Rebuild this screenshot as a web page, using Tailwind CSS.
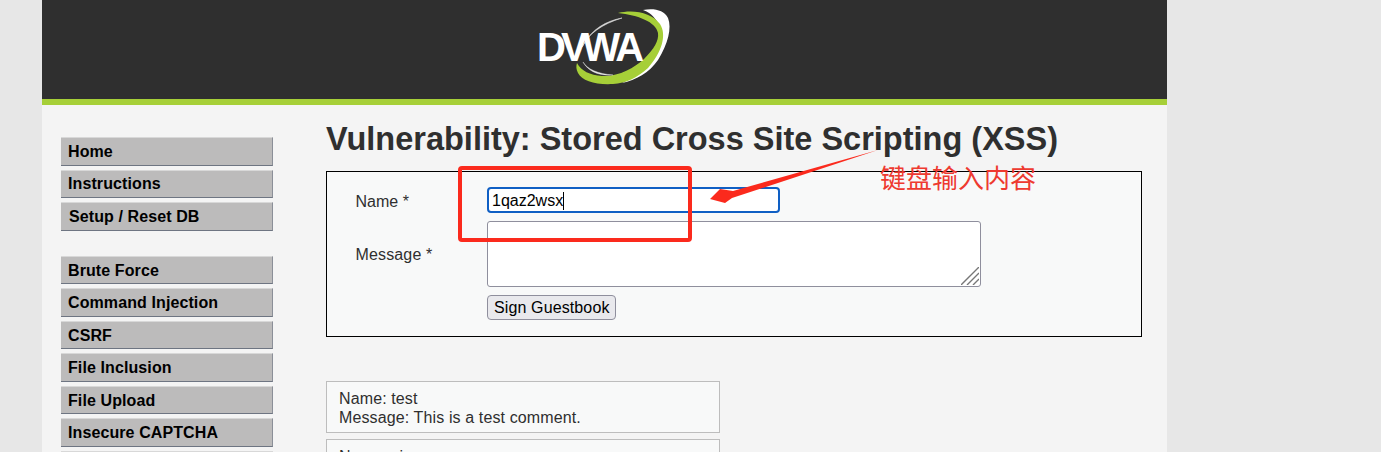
<!DOCTYPE html>
<html lang="en">
<head>
  <meta charset="UTF-8" />
  <title>Vulnerability: Stored Cross Site Scripting (XSS)</title>
  <script src="https://cdn.jsdelivr.net/npm/@tailwindcss/browser@4"></script>
</head>
<body class="bg-[#e7e7e7] h-[452px] overflow-hidden font-['Liberation_Sans',Arial,sans-serif] text-[#2f2f2f]">
  <div class="relative ml-[42px] w-[1125px] h-[452px] bg-[#f4f4f4] overflow-hidden">

    <!-- header -->
    <div class="relative h-[105px] bg-[#2f2f2f] border-b-[6px] border-[#a6cf38] flex justify-center">
      <div class="relative w-[140px] h-[99px] ml-[-1px]">
        <svg class="absolute inset-0" width="140" height="99" viewBox="0 0 140 99" fill="none">
          <path d="M109 10 C120 8 130 10 134 18 C138 28 134 44 124 60 C115 73 102 80 88 83 C104 76 118 62 124 46 C128 34 126 26 122 20 C118 14 114 12 109 10 Z" fill="#ffffff"/>
          <path d="M84 13 C100 9 118 13 126 24 C133 35 128 52 114 68 C103 78 92 83 79 84 C62 85 48 81 44 73 C42 69 42 66 43 63 C47 71 56 75 68 76 C84 77 100 68 110 59 C120 49 125 41 124 33 C122 22 104 15 84 13 Z" fill="#a6cf38"/>
          <path d="M88 18 C72 21 58 29 50 44 L48 47 C54 34 68 24 88 18 Z" fill="#d8d8d8" stroke="#d8d8d8" stroke-width="0.6"/>
          <path d="M49 62 C53 69 64 74 79 75 C64 76 54 71 49 62 Z" fill="#e8e8e8" stroke="#e8e8e8" stroke-width="0.4"/>
        </svg>
        <span class="absolute left-[3px] top-[24px] text-[40px] leading-[46px] font-bold text-white tracking-[-5px] [font-kerning:none]">DVWA</span>
      </div>
    </div>

    <div class="flex">
      <!-- sidebar -->
      <div class="w-[284px] pl-[19px] pt-[32px] shrink-0 text-[16px] font-bold text-black tracking-[0.1px]">
        <div class="flex flex-col w-[212px] gap-[4px]">
          <div class="h-[28.5px] pl-[7px] pt-[1px] leading-[26px] bg-[#bcbbbb] border-t border-t-[#d8d8d8] border-b border-b-[#6e7582] border-r border-r-[#8b8f98]">Home</div>
          <div class="h-[28.5px] pl-[7px] leading-[26px] bg-[#bcbbbb] border-t border-t-[#d8d8d8] border-b border-b-[#6e7582] border-r border-r-[#8b8f98]">Instructions</div>
          <div class="h-[28.5px] pl-[8px] pt-[1px] leading-[26px] bg-[#bcbbbb] border-t border-t-[#d8d8d8] border-b border-b-[#6e7582] border-r border-r-[#8b8f98]">Setup / Reset DB</div>
        </div>
        <div class="flex flex-col w-[212px] gap-[4px] mt-[25px]">
          <div class="h-[28.5px] pl-[7px] pt-[1px] leading-[26px] bg-[#bcbbbb] border-t border-t-[#d8d8d8] border-b border-b-[#6e7582] border-r border-r-[#8b8f98]">Brute Force</div>
          <div class="h-[28.5px] pl-[7px] pt-[1px] leading-[26px] bg-[#bcbbbb] border-t border-t-[#d8d8d8] border-b border-b-[#6e7582] border-r border-r-[#8b8f98]">Command Injection</div>
          <div class="h-[28.5px] pl-[7px] pt-[1px] leading-[26px] bg-[#bcbbbb] border-t border-t-[#d8d8d8] border-b border-b-[#6e7582] border-r border-r-[#8b8f98]">CSRF</div>
          <div class="h-[28.5px] pl-[7px] pt-[1px] leading-[26px] bg-[#bcbbbb] border-t border-t-[#d8d8d8] border-b border-b-[#6e7582] border-r border-r-[#8b8f98]">File Inclusion</div>
          <div class="h-[28.5px] pl-[7px] pt-[1px] leading-[26px] bg-[#bcbbbb] border-t border-t-[#d8d8d8] border-b border-b-[#6e7582] border-r border-r-[#8b8f98]">File Upload</div>
          <div class="h-[28.5px] pl-[7px] pt-[1px] leading-[26px] bg-[#bcbbbb] border-t border-t-[#d8d8d8] border-b border-b-[#6e7582] border-r border-r-[#8b8f98]">Insecure CAPTCHA</div>
          <div class="h-[28.5px] bg-[#bcbbbb] border-t border-t-[#d8d8d8]"></div>
        </div>
      </div>

      <!-- main -->
      <div class="flex-1 min-w-0">
        <h1 class="text-[32.5px] leading-[37px] font-bold mt-[16px] whitespace-nowrap">Vulnerability: Stored Cross Site Scripting (XSS)</h1>
        <div class="w-[816px] h-[166px] mt-[13px] bg-[#f8f9f9] border border-black pt-[15px] text-[16px]">
          <div class="flex">
            <div class="w-[160px] pl-[28.5px] pt-[6px] leading-[18px]">Name *</div>
            <div class="w-[293px] h-[26px] bg-white border-2 border-[#0f5fc4] rounded-[4px] flex items-center pl-[3px] pt-[2px] text-black leading-[18px]">1qaz2wsx<span class="w-px h-[18px] bg-black"></span></div>
          </div>
          <div class="flex mt-[8px]">
            <div class="w-[160px] pl-[28.5px] pt-[25px] leading-[18px] tracking-[0.15px]">Message *</div>
            <div class="relative w-[494px] h-[66px] bg-white border border-[#8f8f9d] rounded-[3px]">
              <svg class="absolute right-[1px] bottom-[1px]" width="18" height="18" viewBox="0 0 18 18" stroke="#777" stroke-width="1.4">
                <path d="M0 18 L18 0 M6 18 L18 6 M12 18 L18 12"/>
              </svg>
            </div>
          </div>
          <div class="pl-[160px] mt-[8px]">
            <button class="h-[25px] pl-[6px] pr-[5px] text-[16px] leading-[20px] tracking-[0.12px] text-black bg-[#e9e9ed] border border-[#8f8f9d] rounded-[4px]">Sign Guestbook</button>
          </div>
        </div>
        <div class="w-[394px] h-[52px] mt-[44px] bg-[#f8f9f9] border border-[#bdbdbd] pl-[12px] pt-[7px] text-[16px] leading-[19px] tracking-[0.12px]">
          <div>Name: test</div>
          <div>Message: This is a test comment.</div>
        </div>
        <div class="w-[394px] h-[52px] mt-[6px] bg-[#f8f9f9] border border-[#bdbdbd] pl-[12px] pt-[7px] text-[16px] leading-[19px] tracking-[0.12px]">Name: xi</div>
      </div>
    </div>

    <!-- screenshot annotations -->
    <div class="absolute left-[416px] top-[166px] w-[234px] h-[76px] border-[4px] border-[#fb2a1d] rounded-[4px]"></div>
    <svg class="absolute left-[660px] top-[148px]" width="180" height="60" viewBox="0 0 180 60">
      <path d="M8 51 L18 41 L31 43 L176 2 L30 50 L23 55 Z" fill="#fb2a1d"/>
    </svg>
    <span class="absolute left-[838px] top-[160px] text-[26px] leading-[34px] text-[#ee3a30] font-['Noto_Sans_CJK_SC',sans-serif]">键盘输入内容</span>
  </div>
</body>
</html>
